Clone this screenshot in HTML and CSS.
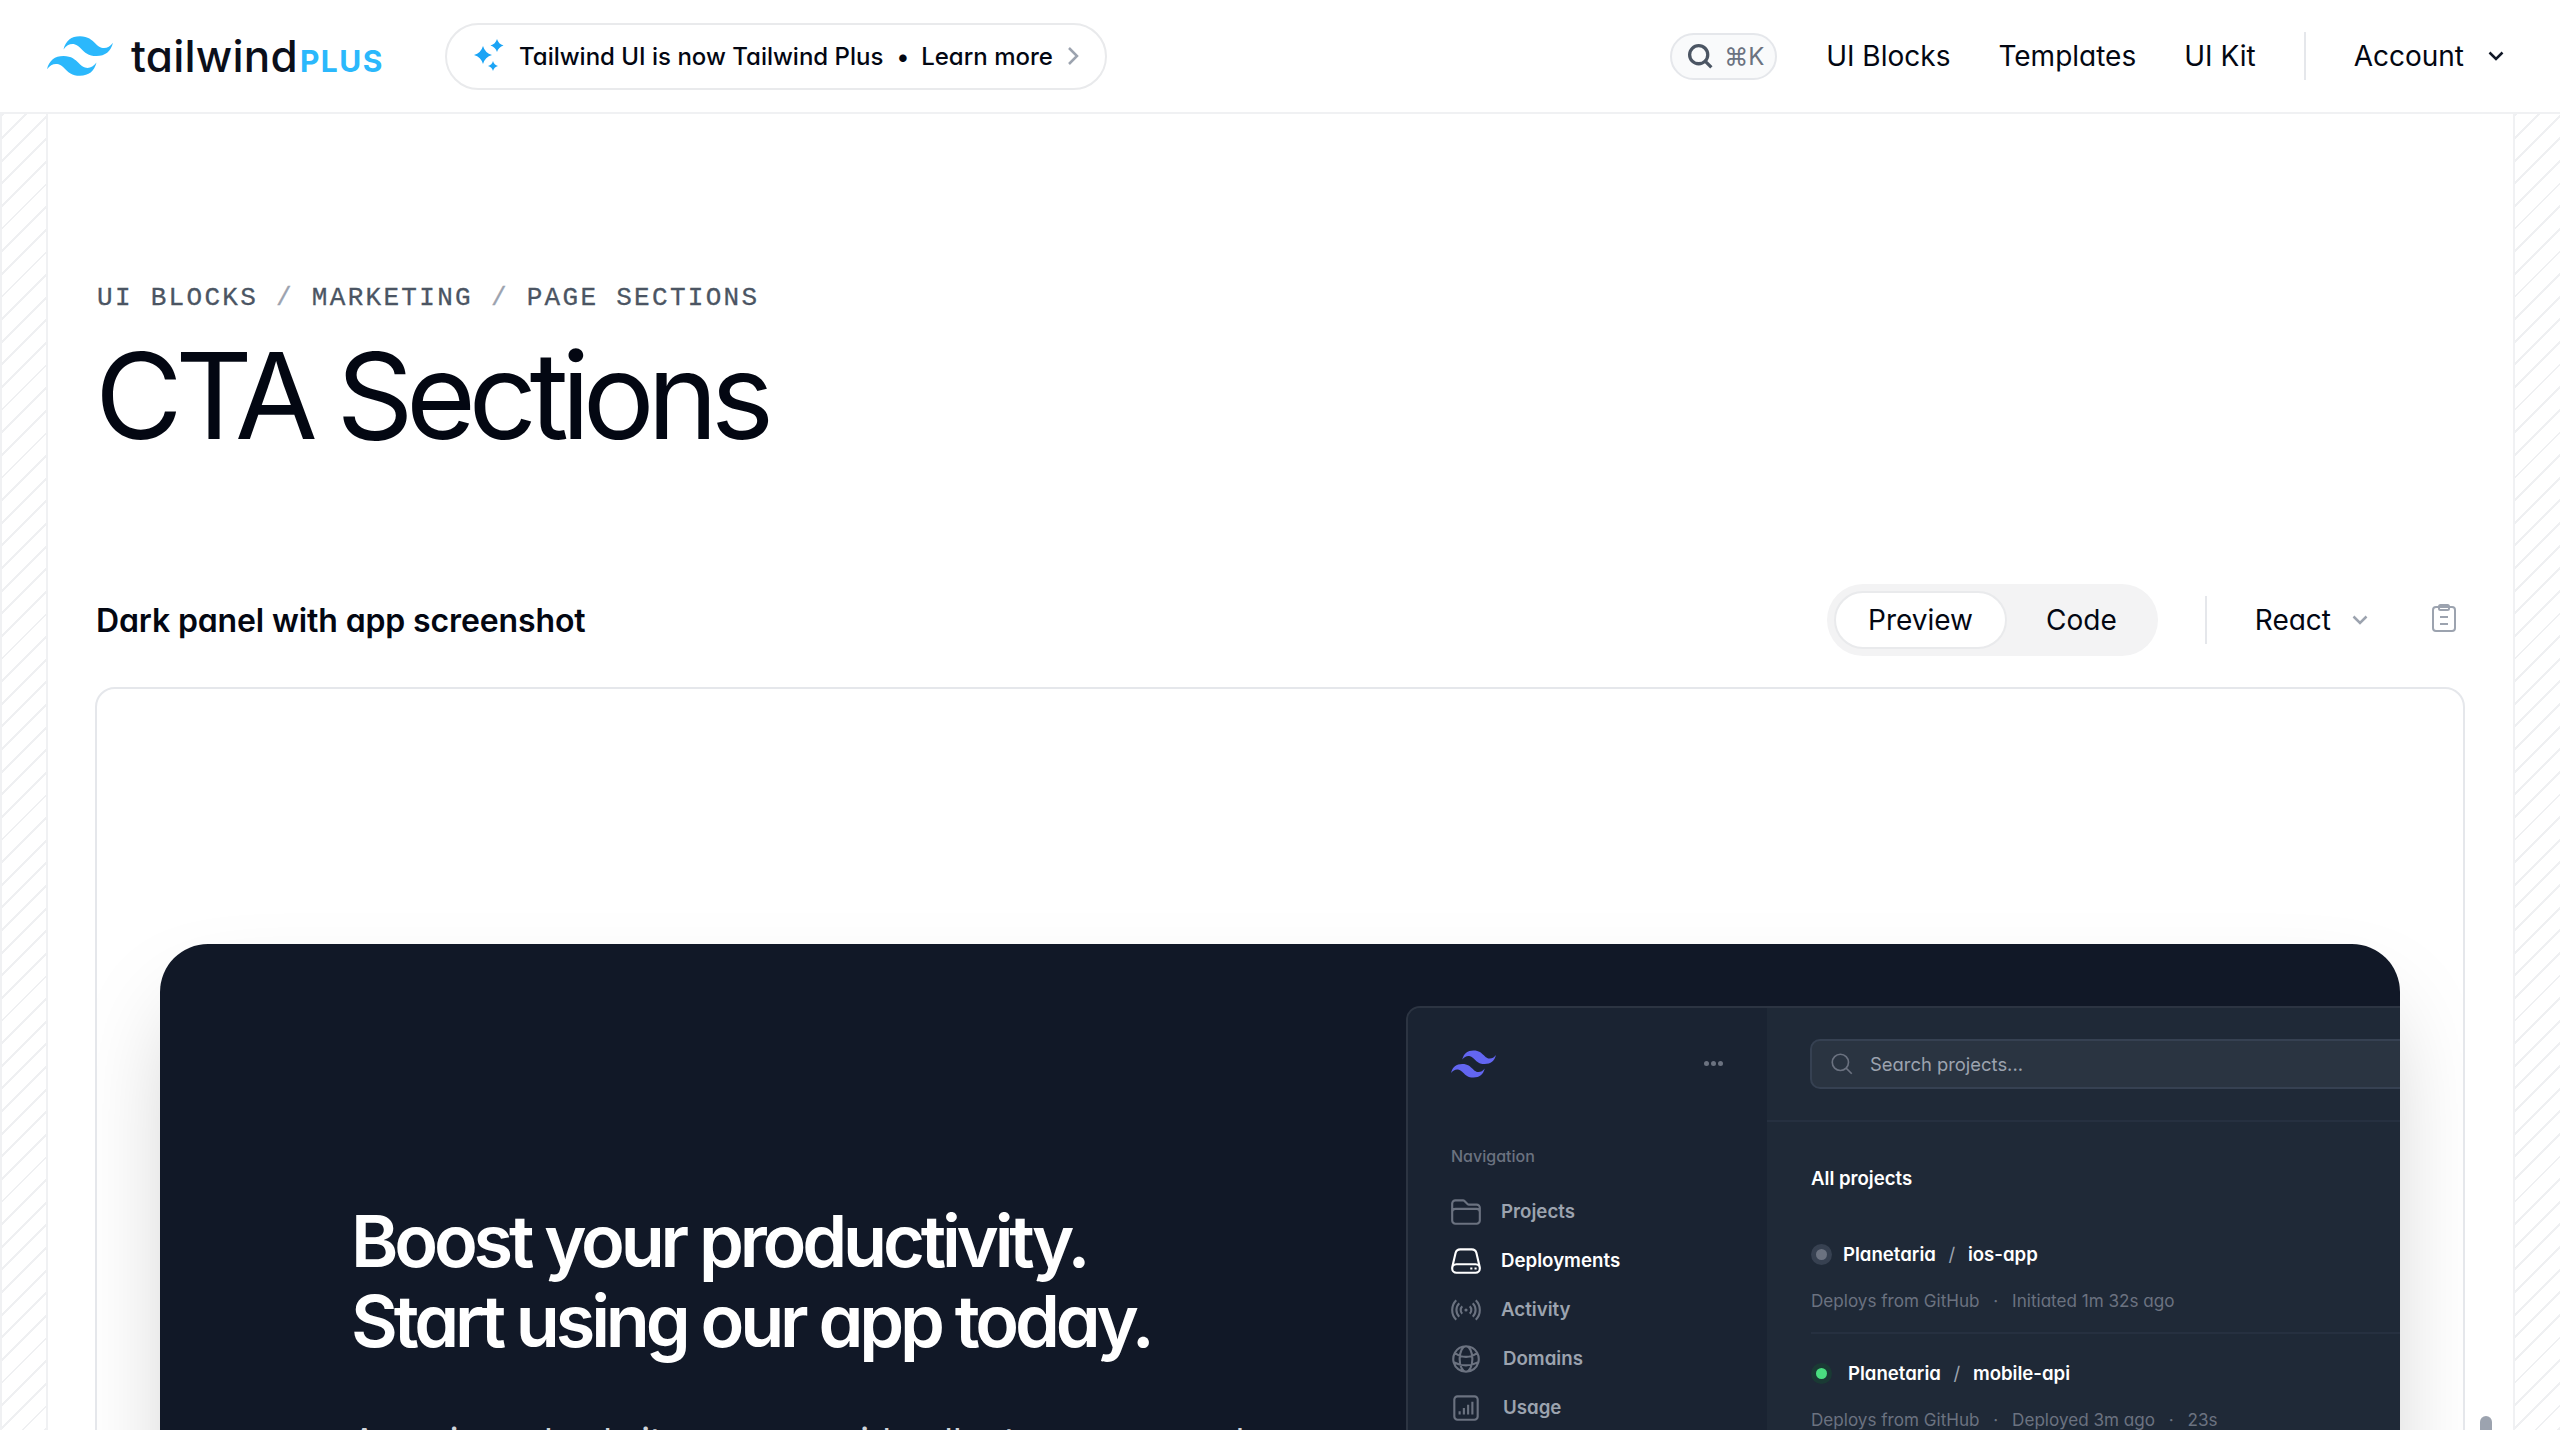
FILE: index.html
```html
<!DOCTYPE html>
<html lang="en">
<head>
    <meta charset="UTF-8">
    <meta name="viewport" content="width=device-width, initial-scale=1.0">
    <title>CTA Sections - Tailwind Plus</title>
    <link rel="stylesheet" href="styles.css">
</head>
<body>
    <header class="topbar">
        <a class="brand" href="#">
            <svg class="brand-mark" viewBox="0 4.8 24 14.4"><path d="M12 4.8c-3.2 0-5.2 1.6-6 4.8 1.2-1.6 2.6-2.2 4.2-1.8.913.228 1.565.89 2.288 1.624C13.666 10.618 15.027 12 18 12c3.2 0 5.2-1.6 6-4.8-1.2 1.6-2.6 2.2-4.2 1.8-.913-.228-1.565-.89-2.288-1.624C16.337 6.182 14.976 4.8 12 4.8zM6 12c-3.2 0-5.2 1.6-6 4.8 1.2-1.6 2.6-2.2 4.2-1.8.913.228 1.565.89 2.288 1.624C7.665 17.818 9.026 19.2 12 19.2c3.2 0 5.2-1.6 6-4.8-1.2 1.6-2.6 2.2-4.2 1.8-.913-.228-1.565-.89-2.288-1.624C10.337 13.382 8.976 12 6 12z"/></svg>
            <span class="brand-name">tailwind</span><span class="brand-plus">PLUS</span>
        </a>
        <a class="announce" href="#">
            <svg class="sparkles" viewBox="0 0 40 40"><path d="M15 10q2 7 9 9q-7 2-9 9q-2-7-9-9q7-2 9-9z"/><path d="M29 3q1.500 5 6.500 6.500q-5 1.500-6.500 6.500q-1.500-5-6.500-6.500q5-1.500 6.500-6.500z"/><path d="M25 25q1 4 5 5q-4 1-5 5q-1-4-5-5q4-1 5-5z"/></svg>
            <span>Tailwind UI is now Tailwind Plus</span>
            <span class="announce-dot">&bull;</span>
            <span>Learn more</span>
            <svg class="announce-arrow" viewBox="0 0 12 20"><path d="M2 2l8 8-8 8"/></svg>
        </a>
        <div class="topnav">
            <button class="search-btn">
                <svg viewBox="0 0 24 24"><path d="M21 21l-5.197-5.197m0 0A7.500 7.500 0 1 0 5.196 5.196a7.500 7.500 0 0 0 10.607 10.607Z"/></svg>
                <span>⌘K</span>
            </button>
            <a href="#">UI Blocks</a>
            <a href="#">Templates</a>
            <a href="#">UI Kit</a>
            <span class="topnav-sep"></span>
            <a class="account" href="#">Account
                <svg viewBox="0 0 16 10"><path d="M1.500 1.500L8 8l6.500-6.500"/></svg>
            </a>
        </div>
    </header>

    <div class="page">
        <div class="rail"></div>
        <main class="content">
            <nav class="crumbs">UI BLOCKS <i>/</i> MARKETING <i>/</i> PAGE SECTIONS</nav>
            <h1 class="page-title">CTA Sections</h1>

            <div class="block-head">
                <h2>Dark panel with app screenshot</h2>
                <div class="toggle">
                    <span class="toggle-on">Preview</span>
                    <span class="toggle-off">Code</span>
                </div>
                <span class="head-sep"></span>
                <span class="lang">React
                    <svg viewBox="0 0 16 10"><path d="M1.500 1.500L8 8l6.500-6.500"/></svg>
                </span>
                <svg class="copy" viewBox="0 0 24 28"><rect x="1" y="3" width="22" height="24" rx="3"/><rect x="7" y="1" width="10" height="5" rx="1.500"/><path d="M8 13h8M8 20h8"/></svg>
            </div>

            <section class="panel">
                <div class="cta">
                    <div class="cta-text">
                        <h2>Boost your productivity.<br>Start using our app today.</h2>
                        <p>Ac euismod vel sit maecenas id pellentesque eu sed consectetur. Malesuada adipiscing sagittis vel nulla.</p>
                    </div>
                    <div class="app">
                        <aside class="app-side">
                            <div class="app-side-top">
                                <svg class="app-logo" viewBox="0 4.8 24 14.4"><path d="M12 4.8c-3.2 0-5.2 1.6-6 4.8 1.2-1.6 2.6-2.2 4.2-1.8.913.228 1.565.89 2.288 1.624C13.666 10.618 15.027 12 18 12c3.2 0 5.2-1.6 6-4.8-1.2 1.6-2.6 2.2-4.2 1.8-.913-.228-1.565-.89-2.288-1.624C16.337 6.182 14.976 4.8 12 4.8zM6 12c-3.2 0-5.2 1.6-6 4.8 1.2-1.6 2.6-2.2 4.2-1.8.913.228 1.565.89 2.288 1.624C7.665 17.818 9.026 19.2 12 19.2c3.2 0 5.2-1.6 6-4.8-1.2 1.6-2.6 2.2-4.2 1.8-.913-.228-1.565-.89-2.288-1.624C10.337 13.382 8.976 12 6 12z"/></svg>
                                <span class="app-dots"><b></b><b></b><b></b></span>
                            </div>
                            <div class="app-label">Navigation</div>
                            <ul class="app-nav">
                                <li>
                                    <svg viewBox="0 0 24 24"><path d="M2.250 12.750V12A2.250 2.250 0 0 1 4.500 9.750h15A2.250 2.250 0 0 1 21.750 12v.75m-8.690-6.440-2.120-2.120a1.500 1.500 0 0 0-1.061-.44H4.500A2.250 2.250 0 0 0 2.250 6v12a2.250 2.250 0 0 0 2.250 2.250h15A2.250 2.250 0 0 0 21.750 18V9a2.250 2.250 0 0 0-2.250-2.250h-5.379a1.500 1.500 0 0 1-1.060-.44Z"/></svg>
                                    Projects
                                </li>
                                <li class="current">
                                    <svg viewBox="0 0 24 24"><path d="M21.750 17.250v-.228a4.500 4.500 0 0 0-.12-1.030l-2.268-9.640a3.375 3.375 0 0 0-3.285-2.602H7.923a3.375 3.375 0 0 0-3.285 2.602l-2.268 9.640a4.500 4.500 0 0 0-.12 1.030v.228m19.500 0a3 3 0 0 1-3 3H5.250a3 3 0 0 1-3-3m19.500 0a3 3 0 0 0-3-3H5.250a3 3 0 0 0-3 3m16.500 0h.008v.008h-.008v-.008Zm-3 0h.008v.008h-.008v-.008Z"/></svg>
                                    Deployments
                                </li>
                                <li>
                                    <svg viewBox="0 0 24 24"><path d="M9.348 14.652a3.750 3.750 0 0 1 0-5.304m5.304 0a3.750 3.750 0 0 1 0 5.304m-7.425 2.121a6.750 6.750 0 0 1 0-9.546m9.546 0a6.750 6.750 0 0 1 0 9.546M5.106 18.894c-3.808-3.807-3.808-9.980 0-13.788m13.788 0c3.808 3.807 3.808 9.980 0 13.788M12 12h.008v.008H12V12Zm.375 0a.375.375 0 1 1-.75 0 .375.375 0 0 1 .75 0Z"/></svg>
                                    Activity
                                </li>
                                <li class="shifted">
                                    <svg viewBox="0 0 24 24"><path d="M12 21a9.004 9.004 0 0 0 8.716-6.747M12 21a9.004 9.004 0 0 1-8.716-6.747M12 21c2.485 0 4.500-4.030 4.500-9S14.485 3 12 3m0 18c-2.485 0-4.500-4.030-4.500-9S9.515 3 12 3m0 0a8.997 8.997 0 0 1 7.843 4.582M12 3a8.997 8.997 0 0 0-7.843 4.582m15.686 0A11.953 11.953 0 0 1 12 10.500c-2.998 0-5.740-1.100-7.843-2.918m15.686 0A8.959 8.959 0 0 1 21 12c0 .778-.099 1.533-.284 2.253m0 0A17.919 17.919 0 0 1 12 16.500c-3.162 0-6.133-.815-8.716-2.247m0 0A9.015 9.015 0 0 1 3 12c0-1.605.42-3.113 1.157-4.418"/></svg>
                                    Domains
                                </li>
                                <li class="shifted">
                                    <svg viewBox="0 0 24 24"><path d="M7.500 14.250v2.250m3-4.500v4.500m3-6.750v6.750m3-9v9M6 20.250h12A2.250 2.250 0 0 0 20.250 18V6A2.250 2.250 0 0 0 18 3.750H6A2.250 2.250 0 0 0 3.750 6v12A2.250 2.250 0 0 0 6 20.250Z"/></svg>
                                    Usage
                                </li>
                            </ul>
                        </aside>
                        <div class="app-main">
                            <div class="app-search-row">
                                <div class="app-search">
                                    <svg viewBox="0 0 24 24"><path d="M21 21l-5.197-5.197m0 0A7.500 7.500 0 1 0 5.196 5.196a7.500 7.500 0 0 0 10.607 10.607Z"/></svg>
                                    Search projects...
                                </div>
                            </div>
                            <div class="app-list">
                                <h3>All projects</h3>
                                <div class="project">
                                    <div class="project-name"><span class="status status-gray"></span>Planetaria <i>/</i> ios-app</div>
                                    <div class="project-meta">Deploys from GitHub <i>&middot;</i> Initiated 1m 32s ago</div>
                                </div>
                                <div class="project project-next">
                                    <div class="project-name"><span class="status status-green"></span>Planetaria <i>/</i> mobile-api</div>
                                    <div class="project-meta">Deploys from GitHub <i>&middot;</i> Deployed 3m ago <i>&middot;</i> 23s</div>
                                </div>
                            </div>
                        </div>
                    </div>
                </div>
            </section>
        </main>
        <div class="rail rail-right"></div>
    </div>
    <span class="scroll-handle"></span>
</body>
</html>
```

FILE: styles.css
```css
* {
    box-sizing: border-box;
}
html, body {
    height: 1430px;
    overflow: hidden;
}
body {
    margin: 0;
    background-color: #ffffff;
    color: #030712;
    font-family: Inter, 'Noto Sans', sans-serif;
    font-feature-settings: "cv11";
}
a {
    color: inherit;
    text-decoration: none;
}
h1, h2, h3, p, ul {
    margin: 0;
    padding: 0;
}

/* top bar */
.topbar {
    display: flex;
    align-items: center;
    height: 114px;
    padding-left: 47px;
    border-bottom: 2px solid #f0f1f3;
}
.brand {
    display: flex;
    align-items: baseline;
    width: 398px;
}
.brand-mark {
    width: 66px;
    height: 40px;
    margin-right: 18px;
    fill: #2bb8fc;
    align-self: center;
}
.brand-name {
    font-size: 44px;
    font-weight: 500;
    letter-spacing: 0.005em;
    color: #0b0f1a;
}
.brand-plus {
    margin-left: 2px;
    font-size: 30px;
    font-weight: 700;
    letter-spacing: 0.05em;
    color: #2bb8fc;
}
.announce {
    display: flex;
    align-items: center;
    height: 67px;
    padding: 0 26px 0 21px;
    border: 2px solid #e9eaec;
    border-radius: 34px;
    font-size: 24px;
    font-weight: 450;
}
.sparkles {
    width: 40px;
    height: 40px;
    margin-right: 11px;
    fill: #1ba4f5;
}
.announce-dot {
    margin: 0 12px 0 13px;
}
.announce-arrow {
    width: 12px;
    height: 20px;
    margin-left: 14px;
    fill: none;
    stroke: #9ca3af;
    stroke-width: 2.500;
}
.topnav {
    display: flex;
    align-items: center;
    gap: 48px;
    margin-left: auto;
    padding-right: 56px;
    font-size: 28px;
    font-weight: 400;
}
.search-btn {
    display: flex;
    align-items: center;
    width: 107px;
    height: 47px;
    margin-right: 1px;
    padding: 0 0 0 14px;
    border: 2px solid #e5e7eb;
    border-radius: 24px;
    background-color: #f9fafb;
    color: #6b7280;
    font-family: inherit;
    font-size: 24px;
}
.search-btn svg {
    width: 29px;
    height: 29px;
    margin-right: 9px;
    fill: none;
    stroke: #4b5563;
    stroke-width: 2.700;
}
.topnav-sep {
    width: 2px;
    height: 48px;
    background-color: #e5e7eb;
}
.account {
    display: flex;
    align-items: center;
    gap: 24px;
}
.account svg {
    width: 16px;
    height: 10px;
    fill: none;
    stroke: #111827;
    stroke-width: 2.500;
}

/* page frame */
.page {
    display: flex;
}
.rail {
    flex: 0 0 48px;
    height: 1316px;
    border: solid #f0f1f3;
    border-width: 0 2px;
    background-image: repeating-linear-gradient(135deg, #eff0f2 0, #eff0f2 2px, transparent 2px, transparent 16px);
}
.rail-right {
    flex-basis: 47px;
    border-right: 0;
}
.content {
    flex: 1;
    min-width: 0;
    padding: 168px 48px 0 47px;
}
.crumbs {
    height: 32px;
    padding-left: 2px;
    font-family: 'Liberation Mono', monospace;
    font-size: 26px;
    line-height: 32px;
    letter-spacing: 2.300px;
    -webkit-text-stroke: 0.3px;
    color: #4b5563;
    white-space: nowrap;
}
.crumbs i {
    font-style: normal;
    color: #9ca3af;
}
.page-title {
    margin-top: 22px;
    font-size: 120px;
    font-weight: 400;
    line-height: 1;
    letter-spacing: -0.0625em;
}
.block-head {
    display: flex;
    align-items: center;
    margin-top: 128px;
    height: 72px;
    padding-left: 1px;
    font-size: 28px;
    font-weight: 400;
}
.block-head h2 {
    font-size: 32px;
    font-weight: 600;
    letter-spacing: -0.004em;
    margin-right: auto;
}
.toggle {
    display: flex;
    align-items: center;
    height: 72px;
    padding-left: 7px;
    border-radius: 36px;
    background-color: #f3f3f4;
}
.toggle-on {
    height: 58px;
    padding: 0 32px;
    line-height: 54px;
    border: 2px solid #e9eaec;
    border-radius: 29px;
    background-color: #ffffff;
}
.toggle-off {
    padding: 0 41px 0 39px;
}
.head-sep {
    width: 2px;
    height: 48px;
    margin: 0 48px 0 47px;
    background-color: #e5e7eb;
}
.lang {
    display: flex;
    align-items: center;
    gap: 21px;
}
.lang svg {
    width: 16px;
    height: 10px;
    fill: none;
    stroke: #9ca3af;
    stroke-width: 2.500;
}
.copy {
    width: 24px;
    height: 28px;
    margin: -4px 9px 0 64px;
    fill: none;
    stroke: #9ca3af;
    stroke-width: 2;
}

/* preview panel */
.panel {
    margin-top: 31px;
    height: 900px;
    padding: 255px 63px 0;
    overflow: hidden;
    border: 2px solid #e5e7eb;
    border-radius: 20px;
}
.cta {
    display: flex;
    align-items: flex-start;
    height: 900px;
    padding: 62px 0 0 192px;
    overflow: hidden;
    border-radius: 48px;
    background-color: #111827;
    box-shadow: 0 50px 100px -24px rgba(0, 0, 0, 0.25);
}
.cta-text {
    flex: 0 0 1054px;
    padding-top: 195px;
    color: #ffffff;
}
.cta-text h2 {
    margin-left: -1px;
    font-size: 72px;
    font-weight: 600;
    line-height: 80px;
    letter-spacing: -0.058em;
}
.cta-text p {
    width: 896px;
    margin-top: 48px;
    font-size: 36px;
    line-height: 64px;
    color: #d1d5db;
}

/* app screenshot */
.app {
    display: flex;
    flex: 0 0 1500px;
    height: 900px;
    border: 2px solid #2c3442;
    border-radius: 14px;
    background-color: #1f2937;
    overflow: hidden;
}
.app-side {
    flex: 0 0 359px;
    padding: 42px 0 0 43px;
    background-color: #1a2332;
}
.app-side-top {
    display: flex;
    align-items: center;
    justify-content: space-between;
    padding-right: 44px;
}
.app-logo {
    width: 45px;
    height: 28px;
    fill: #6366f1;
}
.app-dots {
    display: flex;
    gap: 2px;
    margin-top: -2px;
}
.app-dots b {
    width: 5px;
    height: 5px;
    border-radius: 50%;
    background-color: #6b7280;
}
.app-label {
    margin-top: 66px;
    font-size: 16px;
    font-weight: 500;
    line-height: 24px;
    color: #6b7280;
}
.app-nav {
    margin: 19px 0 0 -2px;
    list-style: none;
}
.app-nav li {
    display: flex;
    align-items: center;
    gap: 18px;
    height: 49px;
    font-size: 18.700px;
    font-weight: 600;
    color: #9ca3af;
}
.app-nav .current {
    color: #ffffff;
}
.app-nav .shifted {
    gap: 20px;
}
.app-nav svg {
    width: 34px;
    height: 34px;
    fill: none;
    stroke: #6b7280;
    stroke-width: 1.500;
}
.app-nav .current svg {
    stroke: #ffffff;
}
.app-main {
    flex: 1;
}
.app-search-row {
    height: 114px;
    padding: 31px 0 0 43px;
    border-bottom: 2px solid #263040;
}
.app-search {
    display: flex;
    align-items: center;
    height: 50px;
    padding-left: 17px;
    border: 2px solid #364152;
    border-radius: 10px;
    background-color: #2a3441;
    font-size: 18.400px;
    color: #9ca3af;
}
.app-search svg {
    width: 26px;
    height: 26px;
    margin-right: 15px;
    fill: none;
    stroke: #6b7280;
    stroke-width: 1.500;
}
.app-list {
    padding-left: 44px;
    color: #ffffff;
}
.app-list h3 {
    margin-top: 44px;
    font-size: 18.600px;
    font-weight: 600;
    line-height: 24px;
}
.project {
    padding-top: 50px;
    font-size: 18.600px;
}
.project-name {
    display: flex;
    align-items: center;
    height: 28px;
    font-weight: 600;
    white-space: pre;
}
.project-name i {
    margin: 0 8px;
    font-style: normal;
    font-weight: 400;
    color: #9ca3af;
}
.status {
    display: flex;
    width: 21px;
    height: 21px;
    margin-right: 11px;
    border-radius: 50%;
}
.status::after {
    content: "";
    width: 11px;
    height: 11px;
    margin: 5px;
    border-radius: 50%;
}
.status-gray {
    background-color: #374151;
}
.status-gray::after {
    background-color: #6b7280;
}
.status-green {
    margin-right: 16px;
    background-color: #1a3a34;
}
.status-green::after {
    background-color: #4ade80;
}
.project-meta {
    margin-top: 17px;
    height: 32px;
    line-height: 32px;
    font-size: 17.100px;
    color: #6b7280;
}
.project-meta i {
    margin: 0 9px;
    font-style: normal;
}
.project-next {
    margin-top: 15px;
    padding-top: 25px;
    border-top: 2px solid #263040;
}
.scroll-handle {
    position: absolute;
    left: 2480px;
    top: 1416px;
    width: 12px;
    height: 14px;
    border-radius: 6px 6px 0 0;
    background-color: #9ca3af;
}
```
